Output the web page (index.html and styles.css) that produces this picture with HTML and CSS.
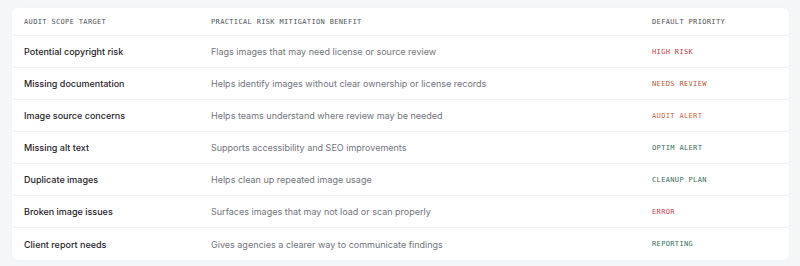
FILE: index.html
```html
<!DOCTYPE html>
<html>
<head>
<meta charset="utf-8">
<link rel="stylesheet" href="styles.css">
</head>
<body>
<div class="card">
  <div class="row head">
    <div class="mono">Audit Scope Target</div>
    <div class="mono">Practical Risk Mitigation Benefit</div>
    <div class="mono">Default Priority</div>
  </div>
  <div class="row">
    <div class="name">Potential copyright risk</div>
    <div class="desc">Flags images that may need license or source review</div>
    <div class="mono tag red">High Risk</div>
  </div>
  <div class="row">
    <div class="name">Missing documentation</div>
    <div class="desc">Helps identify images without clear ownership or license records</div>
    <div class="mono tag brown">Needs Review</div>
  </div>
  <div class="row">
    <div class="name">Image source concerns</div>
    <div class="desc">Helps teams understand where review may be needed</div>
    <div class="mono tag orange">Audit Alert</div>
  </div>
  <div class="row">
    <div class="name">Missing alt text</div>
    <div class="desc">Supports accessibility and SEO improvements</div>
    <div class="mono tag green">Optim Alert</div>
  </div>
  <div class="row">
    <div class="name">Duplicate images</div>
    <div class="desc">Helps clean up repeated image usage</div>
    <div class="mono tag green">Cleanup Plan</div>
  </div>
  <div class="row">
    <div class="name">Broken image issues</div>
    <div class="desc">Surfaces images that may not load or scan properly</div>
    <div class="mono tag pink">Error</div>
  </div>
  <div class="row last">
    <div class="name">Client report needs</div>
    <div class="desc">Gives agencies a clearer way to communicate findings</div>
    <div class="mono tag green">Reporting</div>
  </div>
</div>
</body>
</html>
```
FILE: styles.css
```css
html, body { margin: 0; padding: 0; }
body {
  background: #f4f6f8;
  font-family: Inter, "Noto Sans", sans-serif;
  padding: 8px 11px 6px 12px;
}
.card {
  background: #ffffff;
  border-radius: 6px;
  box-shadow: 0 0 2px rgba(0,0,0,0.03);
}
.row {
  display: grid;
  grid-template-columns: 187px 441px 1fr;
  align-items: center;
  height: 32px;
  padding: 0 12px;
  border-bottom: 1px solid #eef0f2;
  box-sizing: border-box;
}
.row.head { height: 28px; }
.row.last { border-bottom: none; }
.mono {
  font-family: "DejaVu Sans Mono", "Liberation Mono", monospace;
  font-size: 7px;
  letter-spacing: 0.35px;
  text-transform: uppercase;
  color: #50555b;
}
.name {
  font-size: 9px;
  font-weight: 500;
  color: #1f2329;
}
.desc {
  font-size: 9px;
  color: #71757c;
}
.tag.red { color: #c4393f; }
.tag.brown { color: #b85a33; }
.tag.orange { color: #c46a45; }
.tag.green { color: #356f5a; }
.tag.pink { color: #c53f57; }
```
